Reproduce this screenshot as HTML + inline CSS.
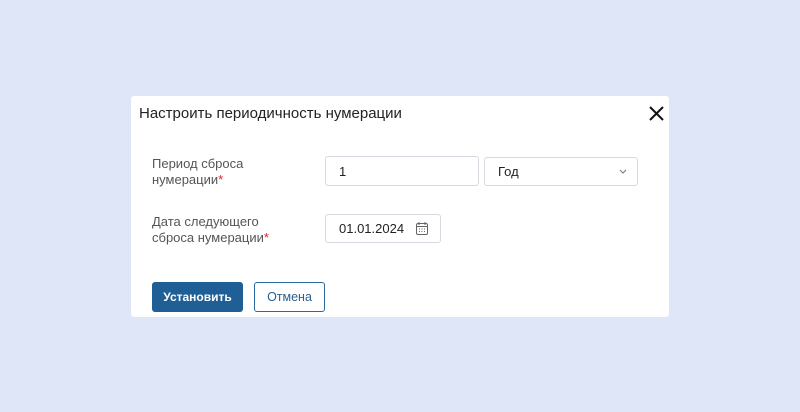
<!DOCTYPE html>
<html><head><meta charset="utf-8"><style>
body{margin:0;width:800px;height:412px;background:#dfe6f8;font-family:"Liberation Sans",sans-serif;position:relative;overflow:hidden}
.d{position:absolute;left:131px;top:96px;width:538px;height:221px;background:#fff;border-radius:3px}
.a{position:absolute}
.t{left:8px;top:9px;font-size:15px;color:#222}
.l{font-size:13px;color:#555;line-height:16px;left:21px}
.l b{color:#d22;font-weight:normal}
.i{border:1px solid #d6d9df;border-radius:3px;box-sizing:border-box;font-size:13px;color:#222;padding-left:13px}
.btn{border-radius:3px;box-sizing:border-box;font-size:12.5px;text-align:center;line-height:30px}
</style></head><body>
<div class="d">
<div class="a t">Настроить периодичность нумерации</div>
<svg class="a" style="left:518px;top:10px" width="15" height="15" viewBox="0 0 15 15"><path d="M1 1L14 14M14 1L1 14" stroke="#111" stroke-width="2"/></svg>
<div class="a l" style="top:60px">Период сброса<br>нумерации<b>*</b></div>
<div class="a i" style="left:194px;top:60px;width:154px;height:30px;line-height:29px">1</div>
<div class="a i" style="left:353px;top:61px;width:154px;height:29px;line-height:28px">Год<svg style="position:absolute;right:10px;top:11px" width="8" height="5"><path d="M1 1L4 4L7 1" stroke="#777" fill="none"/></svg></div>
<div class="a l" style="top:118px">Дата следующего<br>сброса нумерации<b>*</b></div>
<div class="a i" style="left:194px;top:118px;width:116px;height:29px;line-height:28px">01.01.2024<svg style="position:absolute;left:90px;top:7px" width="12" height="13" viewBox="0 0 12 13"><rect x="0.5" y="1.5" width="11" height="11" rx="1.5" fill="none" stroke="#666"/><path d="M0.5 4.5H11.5M3 0V3M9 0V3" stroke="#666"/><path d="M3 7h1M5.5 7h1M8 7h1M3 9.5h1M5.5 9.5h1M8 9.5h1" stroke="#666"/></svg></div>
<div class="a btn" style="left:21px;top:186px;width:91px;height:30px;background:#1f5f96;color:#fff;font-weight:bold;font-size:12px">Установить</div>
<div class="a btn" style="left:123px;top:186px;width:71px;height:30px;border:1px solid #2a6aa3;color:#2a5f94;line-height:28px">Отмена</div>
</div>
</body></html>
